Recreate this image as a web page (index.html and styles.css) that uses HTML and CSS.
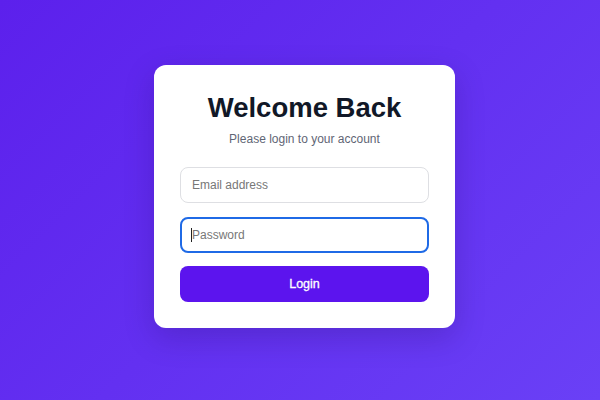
FILE: index.html
```html
<!DOCTYPE html>
<html lang="en">
<head>
<meta charset="utf-8">
<title>Login</title>
<link rel="stylesheet" href="styles.css">
</head>
<body>
<main class="page">
  <form class="card">
    <h1 class="title">Welcome Back</h1>
    <p class="subtitle">Please login to your account</p>
    <input class="field" type="email" placeholder="Email address">
    <div class="field-wrap">
      <input class="field field-focus" type="password" placeholder="Password">
      <span class="caret"></span>
    </div>
    <button class="btn" type="button">Login</button>
  </form>
</main>
</body>
</html>
```
FILE: styles.css
```css
* { box-sizing: border-box; }
html, body { margin: 0; padding: 0; }
body {
  width: 600px;
  height: 400px;
  overflow: hidden;
  font-family: "Liberation Sans", Arial, Helvetica, sans-serif;
  background: linear-gradient(135deg, #5c20ec 0%, #6a40f6 100%);
}
.page {
  width: 600px;
  height: 400px;
  display: flex;
  align-items: center;
  justify-content: center;
  padding: 0 0 7px 9px;
}
.card {
  width: 301px;
  background: #ffffff;
  border-radius: 12px;
  padding: 27px 26px 26px 26px;
  display: flex;
  flex-direction: column;
  box-shadow: 0 10px 30px rgba(30, 10, 90, 0.22);
}
.title {
  margin: 0;
  text-align: center;
  font-size: 27.5px;
  font-weight: 700;
  color: #111827;
  line-height: 32px;
}
.subtitle {
  margin: 8px 0 21px 0;
  text-align: center;
  font-size: 12px;
  color: #5f6675;
  line-height: 14px;
}
.field {
  display: block;
  width: 100%;
  height: 36px;
  border: 1px solid #dedfe3;
  border-radius: 8px;
  padding: 0 11px;
  font-family: inherit;
  font-size: 12px;
  color: #222;
  background: #fff;
  outline: none;
}
.field::placeholder { color: #777; }
.field-wrap {
  position: relative;
  margin-top: 14px;
}
.field-focus {
  border: 2px solid #1f6ae6;
  padding: 0 10px;
}
.caret {
  position: absolute;
  left: 11px;
  top: 11px;
  width: 1px;
  height: 14px;
  background: #222;
}
.btn {
  margin-top: 13px;
  height: 36px;
  width: 100%;
  border: none;
  border-radius: 8px;
  background: #5c14ee;
  color: #ffffff;
  font-family: inherit;
  font-size: 12.5px;
  font-weight: 400;
  -webkit-text-stroke: 0.3px #ffffff;
  cursor: pointer;
}
```
